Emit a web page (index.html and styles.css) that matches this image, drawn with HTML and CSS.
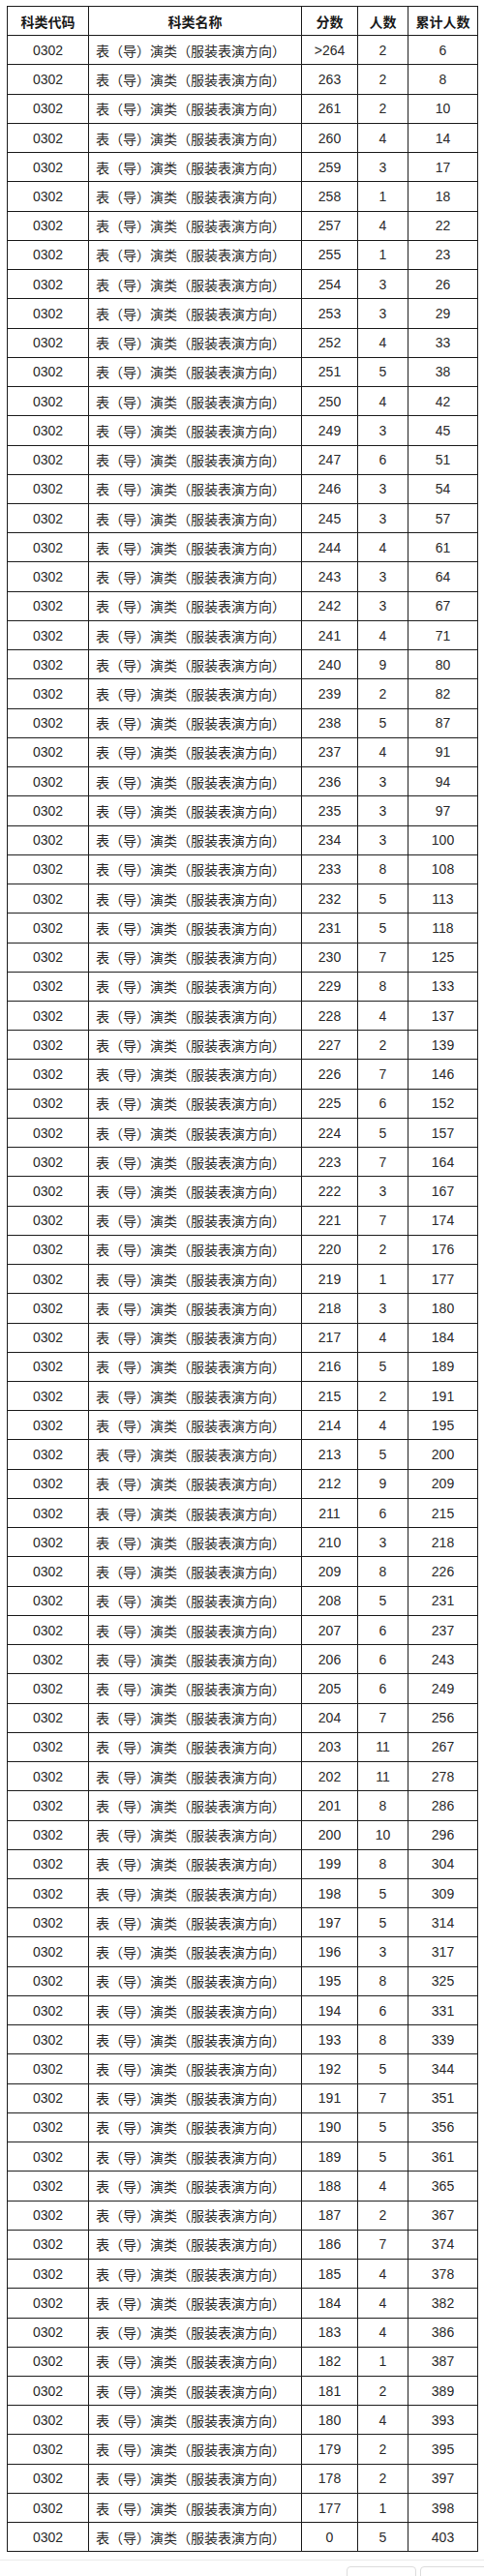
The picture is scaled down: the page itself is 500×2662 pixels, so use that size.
FILE: index.html
```html
<!DOCTYPE html>
<html lang="zh-CN">
<head>
<meta charset="utf-8">
<title>分数段统计</title>
<link rel="stylesheet" href="styles.css">
</head>
<body>
<div class="page">
<table class="score-table">
<colgroup>
<col class="c-code"><col class="c-name"><col class="c-score"><col class="c-num"><col class="c-total">
</colgroup>
<thead>
<tr><th>科类代码</th><th>科类名称</th><th>分数</th><th>人数</th><th>累计人数</th></tr>
</thead>
<tbody>
<tr><td>0302</td><td class="name">表（导）演类（服装表演方向）</td><td>&gt;264</td><td>2</td><td>6</td></tr>
<tr><td>0302</td><td class="name">表（导）演类（服装表演方向）</td><td>263</td><td>2</td><td>8</td></tr>
<tr><td>0302</td><td class="name">表（导）演类（服装表演方向）</td><td>261</td><td>2</td><td>10</td></tr>
<tr><td>0302</td><td class="name">表（导）演类（服装表演方向）</td><td>260</td><td>4</td><td>14</td></tr>
<tr><td>0302</td><td class="name">表（导）演类（服装表演方向）</td><td>259</td><td>3</td><td>17</td></tr>
<tr><td>0302</td><td class="name">表（导）演类（服装表演方向）</td><td>258</td><td>1</td><td>18</td></tr>
<tr><td>0302</td><td class="name">表（导）演类（服装表演方向）</td><td>257</td><td>4</td><td>22</td></tr>
<tr><td>0302</td><td class="name">表（导）演类（服装表演方向）</td><td>255</td><td>1</td><td>23</td></tr>
<tr><td>0302</td><td class="name">表（导）演类（服装表演方向）</td><td>254</td><td>3</td><td>26</td></tr>
<tr><td>0302</td><td class="name">表（导）演类（服装表演方向）</td><td>253</td><td>3</td><td>29</td></tr>
<tr><td>0302</td><td class="name">表（导）演类（服装表演方向）</td><td>252</td><td>4</td><td>33</td></tr>
<tr><td>0302</td><td class="name">表（导）演类（服装表演方向）</td><td>251</td><td>5</td><td>38</td></tr>
<tr><td>0302</td><td class="name">表（导）演类（服装表演方向）</td><td>250</td><td>4</td><td>42</td></tr>
<tr><td>0302</td><td class="name">表（导）演类（服装表演方向）</td><td>249</td><td>3</td><td>45</td></tr>
<tr><td>0302</td><td class="name">表（导）演类（服装表演方向）</td><td>247</td><td>6</td><td>51</td></tr>
<tr><td>0302</td><td class="name">表（导）演类（服装表演方向）</td><td>246</td><td>3</td><td>54</td></tr>
<tr><td>0302</td><td class="name">表（导）演类（服装表演方向）</td><td>245</td><td>3</td><td>57</td></tr>
<tr><td>0302</td><td class="name">表（导）演类（服装表演方向）</td><td>244</td><td>4</td><td>61</td></tr>
<tr><td>0302</td><td class="name">表（导）演类（服装表演方向）</td><td>243</td><td>3</td><td>64</td></tr>
<tr><td>0302</td><td class="name">表（导）演类（服装表演方向）</td><td>242</td><td>3</td><td>67</td></tr>
<tr><td>0302</td><td class="name">表（导）演类（服装表演方向）</td><td>241</td><td>4</td><td>71</td></tr>
<tr><td>0302</td><td class="name">表（导）演类（服装表演方向）</td><td>240</td><td>9</td><td>80</td></tr>
<tr><td>0302</td><td class="name">表（导）演类（服装表演方向）</td><td>239</td><td>2</td><td>82</td></tr>
<tr><td>0302</td><td class="name">表（导）演类（服装表演方向）</td><td>238</td><td>5</td><td>87</td></tr>
<tr><td>0302</td><td class="name">表（导）演类（服装表演方向）</td><td>237</td><td>4</td><td>91</td></tr>
<tr><td>0302</td><td class="name">表（导）演类（服装表演方向）</td><td>236</td><td>3</td><td>94</td></tr>
<tr><td>0302</td><td class="name">表（导）演类（服装表演方向）</td><td>235</td><td>3</td><td>97</td></tr>
<tr><td>0302</td><td class="name">表（导）演类（服装表演方向）</td><td>234</td><td>3</td><td>100</td></tr>
<tr><td>0302</td><td class="name">表（导）演类（服装表演方向）</td><td>233</td><td>8</td><td>108</td></tr>
<tr><td>0302</td><td class="name">表（导）演类（服装表演方向）</td><td>232</td><td>5</td><td>113</td></tr>
<tr><td>0302</td><td class="name">表（导）演类（服装表演方向）</td><td>231</td><td>5</td><td>118</td></tr>
<tr><td>0302</td><td class="name">表（导）演类（服装表演方向）</td><td>230</td><td>7</td><td>125</td></tr>
<tr><td>0302</td><td class="name">表（导）演类（服装表演方向）</td><td>229</td><td>8</td><td>133</td></tr>
<tr><td>0302</td><td class="name">表（导）演类（服装表演方向）</td><td>228</td><td>4</td><td>137</td></tr>
<tr><td>0302</td><td class="name">表（导）演类（服装表演方向）</td><td>227</td><td>2</td><td>139</td></tr>
<tr><td>0302</td><td class="name">表（导）演类（服装表演方向）</td><td>226</td><td>7</td><td>146</td></tr>
<tr><td>0302</td><td class="name">表（导）演类（服装表演方向）</td><td>225</td><td>6</td><td>152</td></tr>
<tr><td>0302</td><td class="name">表（导）演类（服装表演方向）</td><td>224</td><td>5</td><td>157</td></tr>
<tr><td>0302</td><td class="name">表（导）演类（服装表演方向）</td><td>223</td><td>7</td><td>164</td></tr>
<tr><td>0302</td><td class="name">表（导）演类（服装表演方向）</td><td>222</td><td>3</td><td>167</td></tr>
<tr><td>0302</td><td class="name">表（导）演类（服装表演方向）</td><td>221</td><td>7</td><td>174</td></tr>
<tr><td>0302</td><td class="name">表（导）演类（服装表演方向）</td><td>220</td><td>2</td><td>176</td></tr>
<tr><td>0302</td><td class="name">表（导）演类（服装表演方向）</td><td>219</td><td>1</td><td>177</td></tr>
<tr><td>0302</td><td class="name">表（导）演类（服装表演方向）</td><td>218</td><td>3</td><td>180</td></tr>
<tr><td>0302</td><td class="name">表（导）演类（服装表演方向）</td><td>217</td><td>4</td><td>184</td></tr>
<tr><td>0302</td><td class="name">表（导）演类（服装表演方向）</td><td>216</td><td>5</td><td>189</td></tr>
<tr><td>0302</td><td class="name">表（导）演类（服装表演方向）</td><td>215</td><td>2</td><td>191</td></tr>
<tr><td>0302</td><td class="name">表（导）演类（服装表演方向）</td><td>214</td><td>4</td><td>195</td></tr>
<tr><td>0302</td><td class="name">表（导）演类（服装表演方向）</td><td>213</td><td>5</td><td>200</td></tr>
<tr><td>0302</td><td class="name">表（导）演类（服装表演方向）</td><td>212</td><td>9</td><td>209</td></tr>
<tr><td>0302</td><td class="name">表（导）演类（服装表演方向）</td><td>211</td><td>6</td><td>215</td></tr>
<tr><td>0302</td><td class="name">表（导）演类（服装表演方向）</td><td>210</td><td>3</td><td>218</td></tr>
<tr><td>0302</td><td class="name">表（导）演类（服装表演方向）</td><td>209</td><td>8</td><td>226</td></tr>
<tr><td>0302</td><td class="name">表（导）演类（服装表演方向）</td><td>208</td><td>5</td><td>231</td></tr>
<tr><td>0302</td><td class="name">表（导）演类（服装表演方向）</td><td>207</td><td>6</td><td>237</td></tr>
<tr><td>0302</td><td class="name">表（导）演类（服装表演方向）</td><td>206</td><td>6</td><td>243</td></tr>
<tr><td>0302</td><td class="name">表（导）演类（服装表演方向）</td><td>205</td><td>6</td><td>249</td></tr>
<tr><td>0302</td><td class="name">表（导）演类（服装表演方向）</td><td>204</td><td>7</td><td>256</td></tr>
<tr><td>0302</td><td class="name">表（导）演类（服装表演方向）</td><td>203</td><td>11</td><td>267</td></tr>
<tr><td>0302</td><td class="name">表（导）演类（服装表演方向）</td><td>202</td><td>11</td><td>278</td></tr>
<tr><td>0302</td><td class="name">表（导）演类（服装表演方向）</td><td>201</td><td>8</td><td>286</td></tr>
<tr><td>0302</td><td class="name">表（导）演类（服装表演方向）</td><td>200</td><td>10</td><td>296</td></tr>
<tr><td>0302</td><td class="name">表（导）演类（服装表演方向）</td><td>199</td><td>8</td><td>304</td></tr>
<tr><td>0302</td><td class="name">表（导）演类（服装表演方向）</td><td>198</td><td>5</td><td>309</td></tr>
<tr><td>0302</td><td class="name">表（导）演类（服装表演方向）</td><td>197</td><td>5</td><td>314</td></tr>
<tr><td>0302</td><td class="name">表（导）演类（服装表演方向）</td><td>196</td><td>3</td><td>317</td></tr>
<tr><td>0302</td><td class="name">表（导）演类（服装表演方向）</td><td>195</td><td>8</td><td>325</td></tr>
<tr><td>0302</td><td class="name">表（导）演类（服装表演方向）</td><td>194</td><td>6</td><td>331</td></tr>
<tr><td>0302</td><td class="name">表（导）演类（服装表演方向）</td><td>193</td><td>8</td><td>339</td></tr>
<tr><td>0302</td><td class="name">表（导）演类（服装表演方向）</td><td>192</td><td>5</td><td>344</td></tr>
<tr><td>0302</td><td class="name">表（导）演类（服装表演方向）</td><td>191</td><td>7</td><td>351</td></tr>
<tr><td>0302</td><td class="name">表（导）演类（服装表演方向）</td><td>190</td><td>5</td><td>356</td></tr>
<tr><td>0302</td><td class="name">表（导）演类（服装表演方向）</td><td>189</td><td>5</td><td>361</td></tr>
<tr><td>0302</td><td class="name">表（导）演类（服装表演方向）</td><td>188</td><td>4</td><td>365</td></tr>
<tr><td>0302</td><td class="name">表（导）演类（服装表演方向）</td><td>187</td><td>2</td><td>367</td></tr>
<tr><td>0302</td><td class="name">表（导）演类（服装表演方向）</td><td>186</td><td>7</td><td>374</td></tr>
<tr><td>0302</td><td class="name">表（导）演类（服装表演方向）</td><td>185</td><td>4</td><td>378</td></tr>
<tr><td>0302</td><td class="name">表（导）演类（服装表演方向）</td><td>184</td><td>4</td><td>382</td></tr>
<tr><td>0302</td><td class="name">表（导）演类（服装表演方向）</td><td>183</td><td>4</td><td>386</td></tr>
<tr><td>0302</td><td class="name">表（导）演类（服装表演方向）</td><td>182</td><td>1</td><td>387</td></tr>
<tr><td>0302</td><td class="name">表（导）演类（服装表演方向）</td><td>181</td><td>2</td><td>389</td></tr>
<tr><td>0302</td><td class="name">表（导）演类（服装表演方向）</td><td>180</td><td>4</td><td>393</td></tr>
<tr><td>0302</td><td class="name">表（导）演类（服装表演方向）</td><td>179</td><td>2</td><td>395</td></tr>
<tr><td>0302</td><td class="name">表（导）演类（服装表演方向）</td><td>178</td><td>2</td><td>397</td></tr>
<tr><td>0302</td><td class="name">表（导）演类（服装表演方向）</td><td>177</td><td>1</td><td>398</td></tr>
<tr><td>0302</td><td class="name">表（导）演类（服装表演方向）</td><td>0</td><td>5</td><td>403</td></tr>
</tbody>
</table>
<div class="footer">
<div class="btn"></div>
<div class="btn btn-wide"></div>
</div>
</div>
</body>
</html>
```
FILE: styles.css
```css
html, body {
  margin: 0;
  padding: 0;
  background: #fff;
}
.page {
  padding-top: 6px;
}
.score-table {
  margin-left: 7px;
  width: 486px;
  table-layout: fixed;
  border-collapse: collapse;
  font-family: "Liberation Sans", "Noto Sans CJK SC", sans-serif;
  font-size: 14px;
  color: #2a2a2a;
}
.c-code { width: 84px; }
.c-name { width: 220px; }
.c-score { width: 58px; }
.c-num { width: 52px; }
.c-total { width: 72px; }
.score-table th,
.score-table td {
  border: 1.5px solid #1e1e1e;
  height: 30.24px;
  padding: 0;
  text-align: center;
  vertical-align: middle;
  box-sizing: border-box;
  white-space: nowrap;
  line-height: 16px;
}
.score-table th {
  font-family: "Noto Sans CJK SC", "Liberation Sans", sans-serif;
  font-weight: 700;
  font-size: 14px;
  color: #1a1a1a;
}
.score-table td.name {
  text-align: left;
  padding-left: 7px;
  font-family: "Noto Sans CJK SC", "Liberation Sans", sans-serif;
}
.footer {
  margin-top: 8px;
  border-top: 1px solid #ebebeb;
  padding-top: 6px;
  display: flex;
  justify-content: flex-end;
  gap: 4px;
  overflow: hidden;
  height: 20px;
}
.btn {
  width: 72px;
  height: 30px;
  border: 1px solid #dcdcdc;
  border-radius: 4px;
  box-sizing: border-box;
  flex-shrink: 0;
}
.btn-wide {
  width: 72px;
  margin-right: -6px;
}
```
